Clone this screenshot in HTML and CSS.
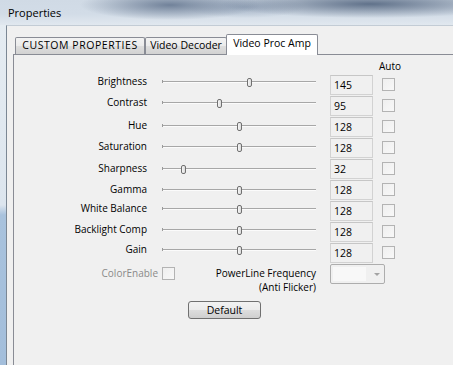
FILE: index.html
```html
<!DOCTYPE html>
<html>
<head>
<meta charset="utf-8">
<title>Properties</title>
<link rel="stylesheet" href="styles.css">
</head>
<body>
<div class="window">
  <div class="titlebar"><span class="title">Properties</span></div>
  <div class="frame">
    <div class="frame-edge"></div>
    <div class="client">
      <div class="tabs">
        <div class="tab tab-custom">CUSTOM PROPERTIES</div>
        <div class="tab tab-decoder">Video Decoder</div>
        <div class="tab tab-active">Video Proc Amp</div>
      </div>
      <div class="panel">
        <div class="head"><span class="auto">Auto</span></div>

        <div class="row">
          <div class="ls"><span class="lbl">Brightness</span><div class="slider"><span class="thumb" style="left:84.5px"></span></div></div>
          <div class="val">145</div><div class="chk"></div>
        </div>
        <div class="row">
          <div class="ls"><span class="lbl">Contrast</span><div class="slider"><span class="thumb" style="left:55.4px"></span></div></div>
          <div class="val">95</div><div class="chk"></div>
        </div>
        <div class="row">
          <div class="ls d2"><span class="lbl">Hue</span><div class="slider"><span class="thumb" style="left:74.6px"></span></div></div>
          <div class="val">128</div><div class="chk"></div>
        </div>
        <div class="row">
          <div class="ls d2"><span class="lbl">Saturation</span><div class="slider"><span class="thumb" style="left:74.6px"></span></div></div>
          <div class="val">128</div><div class="chk"></div>
        </div>
        <div class="row">
          <div class="ls d3"><span class="lbl">Sharpness</span><div class="slider"><span class="thumb" style="left:18.7px"></span></div></div>
          <div class="val">32</div><div class="chk"></div>
        </div>
        <div class="row">
          <div class="ls d3"><span class="lbl">Gamma</span><div class="slider"><span class="thumb" style="left:74.6px"></span></div></div>
          <div class="val">128</div><div class="chk"></div>
        </div>
        <div class="row">
          <div class="ls d1"><span class="lbl">White Balance</span><div class="slider"><span class="thumb" style="left:74.6px"></span></div></div>
          <div class="val">128</div><div class="chk"></div>
        </div>
        <div class="row">
          <div class="ls d1"><span class="lbl">Backlight Comp</span><div class="slider"><span class="thumb" style="left:74.6px"></span></div></div>
          <div class="val">128</div><div class="chk"></div>
        </div>
        <div class="row">
          <div class="ls"><span class="lbl">Gain</span><div class="slider"><span class="thumb" style="left:74.6px"></span></div></div>
          <div class="val">128</div><div class="chk"></div>
        </div>

        <div class="bottom">
          <span class="ce-label">ColorEnable</span>
          <div class="chk chk-ce"></div>
          <span class="pl-label">PowerLine Frequency<br>(Anti Flicker)</span>
          <div class="combo"><div class="combo-field"></div><span class="combo-arrow"></span></div>
        </div>
        <button class="btn" type="button">Default</button>
      </div>
    </div>
  </div>
</div>
</body>
</html>
```
FILE: styles.css
```css
html, body {
  margin: 0;
  padding: 0;
}
body {
  width: 453px;
  height: 365px;
  overflow: hidden;
  font-family: "Open Sans", "Noto Sans", sans-serif;
  font-size: 10px;
  color: #000;
  background: #f0f0f0;
}
.window {
  display: flex;
  flex-direction: column;
  height: 365px;
}
.titlebar {
  flex: none;
  height: 25px;
  display: flex;
  align-items: center;
  padding-left: 8px;
  background:
    radial-gradient(ellipse 90px 15px at 170px 5px, rgba(96, 114, 140, 0.85), rgba(96, 114, 140, 0)),
    radial-gradient(ellipse 150px 14px at 370px 4px, rgba(84, 102, 128, 0.9), rgba(84, 102, 128, 0)),
    radial-gradient(ellipse 60px 11px at 245px 7px, rgba(130, 148, 172, 0.6), rgba(130, 148, 172, 0)),
    linear-gradient(to bottom, #d0dae5 0%, #d2dce7 55%, #e1e8ef 100%);
}
.title {
  font-size: 11px;
  color: #000;
}
.frame {
  flex: 1;
  display: flex;
}
.frame-edge {
  width: 6px;
  flex: none;
  background: linear-gradient(to bottom, #e5ecf2 0px, #dce5ee 180px, #a8c2dd 190px, #a3bedb 100%);
}
.client {
  flex: 1;
  display: flex;
  flex-direction: column;
  border-left: 1px solid #7b8794;
  border-top: 1px solid #c3ccd5;
  background: #f0f0f0;
  padding: 8px 0 0 6px;
}
.tabs {
  display: flex;
  align-items: flex-end;
  height: 20px;
  padding-left: 2px;
  position: relative;
  z-index: 1;
}
.tab {
  box-sizing: border-box;
  height: 17px;
  border: 1px solid #898c95;
  border-bottom: none;
  border-radius: 2px 2px 0 0;
  background: linear-gradient(to bottom, #f3f3f3 0%, #ebebeb 50%, #dedede 50%, #d2d2d2 100%);
  text-align: center;
  line-height: 15px;
  font-size: 10.5px;
  white-space: nowrap;
}
.tab-custom {
  width: 130px;
  letter-spacing: 0.55px;
}
.tab-decoder {
  width: 82px;
}
.tab-active {
  width: 92px;
  height: 21px;
  margin-left: -1px;
  margin-bottom: -1px;
  background: #fff;
  line-height: 16px;
  position: relative;
}
.panel {
  flex: 1;
  border-left: 1px solid #898c95;
  border-top: 1px solid #898c95;
  background: #f0f0f0;
  padding-top: 3px;
}
.head {
  height: 16.5px;
  line-height: 16px;
}
.auto {
  margin-left: 365px;
}
.row {
  display: flex;
  align-items: flex-start;
  height: 21.1px;
}
.ls {
  display: flex;
  align-items: center;
  width: 302px;
  flex: none;
}
.d1 { margin-top: 0.7px; }
.d2 { margin-top: 2px; }
.d3 { margin-top: 3.5px; }
.lbl {
  width: 133px;
  flex: none;
  text-align: right;
  line-height: 13px;
  white-space: nowrap;
}
.slider {
  margin-left: 15px;
  width: 154px;
  height: 13px;
  position: relative;
  flex: none;
}
.slider::before {
  content: "";
  position: absolute;
  left: 0;
  right: 0;
  top: 6px;
  height: 1px;
  background: #a7a7a7;
  border-bottom: 1px solid #fbfbfb;
}
.slider::after {
  content: "";
  position: absolute;
  left: 0;
  top: 5px;
  width: 1px;
  height: 3px;
  background: #9a9a9a;
}
.thumb {
  position: absolute;
  top: 3px;
  width: 5px;
  height: 9px;
  box-sizing: border-box;
  border: 1px solid #707070;
  border-radius: 2px;
  background: linear-gradient(to right, #f6f6f6, #dcdcdc);
  z-index: 1;
}
.val {
  margin-left: 14px;
  width: 43px;
  height: 20px;
  flex: none;
  box-sizing: border-box;
  border: 1px solid #d2d2d2;
  border-top-color: #c6c6c6;
  background: #f0f0f0;
  padding-left: 3px;
  line-height: 18px;
  font-size: 10.5px;
}
.chk {
  margin-left: 9px;
  margin-top: 3px;
  width: 13px;
  height: 13px;
  flex: none;
  box-sizing: border-box;
  border: 1px solid #b3b3b3;
  background: linear-gradient(to bottom right, #efefef, #f8f8f8);
}
.bottom {
  display: flex;
  align-items: flex-start;
  height: 30px;
}
.ce-label {
  width: 144px;
  flex: none;
  text-align: right;
  margin-top: 3px;
  line-height: 13px;
  color: #8a8a8a;
}
.chk-ce {
  margin-left: 4px;
  margin-top: 3px;
}
.pl-label {
  width: 141px;
  flex: none;
  text-align: right;
  margin-top: 2px;
  line-height: 14px;
}
.combo {
  margin-left: 14px;
  width: 55px;
  height: 20px;
  flex: none;
  box-sizing: border-box;
  border: 1px solid #adadad;
  border-radius: 2px;
  background: #f0f0f0;
  padding: 2px;
  display: flex;
  align-items: center;
}
.combo-field {
  width: 33px;
  height: 14px;
  background: #f8f8f8;
}
.combo-arrow {
  margin-left: auto;
  margin-right: 2px;
  width: 0;
  height: 0;
  border-left: 3px solid transparent;
  border-right: 3px solid transparent;
  border-top: 3px solid #a3a3a3;
}
.btn {
  display: block;
  margin: 7px 0 0 174px;
  width: 73px;
  height: 18px;
  padding: 0;
  box-sizing: border-box;
  border: 1px solid #707070;
  border-radius: 3px;
  background: linear-gradient(to bottom, #f2f2f2 0%, #ebebeb 50%, #dddddd 51%, #cfcfcf 100%);
  font-family: inherit;
  font-size: 10.5px;
  line-height: 16px;
  color: #000;
  text-align: center;
}
```
